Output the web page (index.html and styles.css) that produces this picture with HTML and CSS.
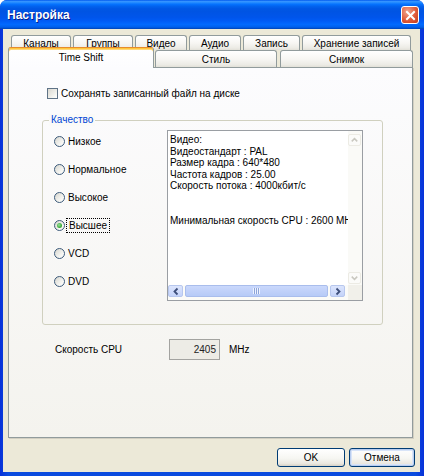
FILE: index.html
```html
<!DOCTYPE html>
<html>
<head>
<meta charset="utf-8">
<title>Настройка</title>
<link rel="stylesheet" href="styles.css">
</head>
<body>
<div class="window">
  <div class="titlebar">
    <span class="title">Настройка</span>
    <span class="close">
      <svg width="15" height="15" viewBox="0 0 15 15"><path d="M4 4 L11 11 M11 4 L4 11" stroke="#fff" stroke-width="2" stroke-linecap="square"/></svg>
    </span>
  </div>
  <div class="client">
    <div class="tabstrip">
      <div class="tabrow back">
        <div class="tab w-kan">Каналы</div>
        <div class="tab w-grp">Группы</div>
        <div class="tab w-vid">Видео</div>
        <div class="tab w-aud">Аудио</div>
        <div class="tab w-rec">Запись</div>
        <div class="tab w-sto">Хранение записей</div>
      </div>
      <div class="tabrow front">
        <div class="tab sel w-ts">Time Shift</div>
        <div class="tab w-sty">Стиль</div>
        <div class="tab w-snp">Снимок</div>
      </div>
    </div>
    <div class="panel">
      <div class="check"><span class="cbox"></span><span>Сохранять записанный файл на диске</span></div>
      <div class="group">
        <span class="legend">Качество</span>
        <div class="group-body">
          <div class="radios">
            <div class="radio"><span class="rbtn"></span><span>Низкое</span></div>
            <div class="radio"><span class="rbtn"></span><span>Нормальное</span></div>
            <div class="radio"><span class="rbtn"></span><span>Высокое</span></div>
            <div class="radio"><span class="rbtn on"></span><span class="focus">Высшее</span></div>
            <div class="radio"><span class="rbtn"></span><span>VCD</span></div>
            <div class="radio"><span class="rbtn"></span><span>DVD</span></div>
          </div>
          <div class="info">
            <div class="info-text">
              <div>Видео:</div>
              <div>Видеостандарт : PAL</div>
              <div>Размер кадра : 640*480</div>
              <div>Частота кадров : 25.00</div>
              <div>Скорость потока : 4000кбит/с</div>
              <div>&nbsp;</div>
              <div>&nbsp;</div>
              <div>Минимальная скорость CPU : 2600 MHz</div>
            </div>
            <div class="vscroll">
              <span class="vbtn"><svg width="12" height="12" viewBox="0 0 12 12"><path d="M3 7.5 L6 4.5 L9 7.5" fill="none" stroke="#C9C8C0" stroke-width="1.6"/></svg></span>
              <span class="vbtn"><svg width="12" height="12" viewBox="0 0 12 12"><path d="M3 4.5 L6 7.5 L9 4.5" fill="none" stroke="#C9C8C0" stroke-width="1.6"/></svg></span>
            </div>
            <div class="hscroll">
              <span class="hbtn"><svg width="12" height="11" viewBox="0 0 12 11"><path d="M7.5 2.5 L4.5 5.5 L7.5 8.5" fill="none" stroke="#3D4E7A" stroke-width="1.8"/></svg></span>
              <span class="thumb"><span class="grip"></span></span>
              <span class="hbtn"><svg width="12" height="11" viewBox="0 0 12 11"><path d="M4.5 2.5 L7.5 5.5 L4.5 8.5" fill="none" stroke="#3D4E7A" stroke-width="1.8"/></svg></span>
            </div>
            <div class="corner"></div>
          </div>
        </div>
      </div>
      <div class="cpu">
        <span class="cpu-label">Скорость CPU</span>
        <span class="cpu-input">2405</span>
        <span class="cpu-unit">MHz</span>
      </div>
    </div>
    <div class="buttons">
      <div class="btn w-ok">OK</div>
      <div class="btn def w-cancel">Отмена</div>
    </div>
  </div>
</div>
</body>
</html>
```

FILE: styles.css
```css
* { box-sizing: border-box; }
html, body { margin: 0; padding: 0; background: #ffffff; }
body {
  font-family: "Liberation Sans", Arial, sans-serif;
  font-size: 10px;
  color: #000;
}
.window {
  width: 424px;
  height: 476px;
  display: flex;
  flex-direction: column;
  background: linear-gradient(90deg, #0831D9, #0A4BDF 2%, #0A4BDF 98%, #0831D9);
  border-radius: 7px 7px 0 0;
  overflow: hidden;
}
.titlebar {
  height: 29px;
  flex: none;
  display: flex;
  align-items: center;
  justify-content: space-between;
  padding: 1px 5px 0 7px;
  background: linear-gradient(#0058EE 0%, #3593FF 5%, #288EFF 8%, #127DFF 12%, #036FFC 16%, #0262EE 22%, #0057E5 30%, #0054E3 40%, #0055EB 60%, #005BF5 72%, #026AFE 84%, #0062EF 92%, #0052D6 97%, #0040AB 100%);
}
.title {
  color: #fff;
  font-weight: bold;
  font-size: 12px;
  text-shadow: 1px 1px 0 #0A1E8C;
}
.close {
  width: 18px;
  height: 18px;
  border: 1px solid #fff;
  border-radius: 3px;
  background: radial-gradient(circle at 35% 30%, #F0A58E, #E05B3A 55%, #C0391B);
  display: flex;
  align-items: center;
  justify-content: center;
}
.client {
  flex: 1;
  margin: 0 4px 4px 3px;
  background: #ECE9D8;
  padding: 6px 7px 0 5px;
  display: flex;
  flex-direction: column;
}
/* tabs */
.tabstrip {
  height: 32px;
  flex: none;
  display: flex;
  flex-direction: column;
}
.tabrow { display: flex; flex: none; }
.tabrow.back { height: 15px; padding-left: 3px; gap: 2px; }
.tabrow.front { height: 17px; align-items: flex-end; }
.tab {
  height: 100%;
  border: 1px solid #919B9C;
  border-bottom: none;
  border-radius: 3px 3px 0 0;
  background: linear-gradient(#FFFFFF, #F7F6F3 50%, #ECEBE5 85%, #E2E0D8);
  display: flex;
  align-items: center;
  justify-content: center;
  white-space: nowrap;
  padding-top: 1px;
}
.tab.sel {
  height: 21px;
  margin-bottom: -1px;
  position: relative;
  z-index: 2;
  background: linear-gradient(#FFFFFF, #FCFCFE);
  border-top: 1px solid #E68B2C;
  box-shadow: inset 0 1px 0 #FFC73C, inset 0 2px 0 #FFD77A;
  padding-top: 0;
  padding-bottom: 1px;
}
.w-kan { width: 60px; }
.w-grp { width: 60px; }
.w-vid { width: 52px; }
.w-aud { width: 52px; }
.w-rec { width: 57px; }
.w-sto { width: 109px; }
.w-ts { width: 146px; }
.w-sty { width: 122px; margin-left: 1px; }
.w-snp { width: 133px; margin-left: 3px; }
/* panel */
.panel {
  height: 371px;
  flex: none;
  border: 1px solid #919B9C;
  background: linear-gradient(#FCFCFE, #F4F3EE);
  box-shadow: 1px 1px 0 #D2CFC2;
  display: flex;
  flex-direction: column;
  align-items: flex-start;
}
.check {
  margin: 19px 0 0 38px;
  height: 13px;
  display: flex;
  align-items: center;
  gap: 3px;
}
.cbox {
  width: 11px;
  height: 11px;
  border: 1px solid #5F7387;
  background: linear-gradient(135deg, #D9D8D1, #F4F4F0 70%, #FFFFFF);
}
.group {
  margin: 20px 0 0 33px;
  width: 341px;
  height: 205px;
  border: 1px solid #D0D0BF;
  border-radius: 3px;
  display: flex;
  flex-direction: column;
}
.legend {
  align-self: flex-start;
  margin: -7px 0 0 6px;
  padding: 0 2px;
  height: 12px;
  line-height: 12px;
  color: #0046D5;
  background: #FAFAF8;
}
.group-body {
  display: flex;
  align-items: flex-start;
  padding-left: 11px;
}
.radios {
  width: 113px;
  padding-top: 1px;
  display: flex;
  flex-direction: column;
}
.radio {
  height: 28px;
  display: flex;
  align-items: center;
  gap: 3px;
}
.rbtn {
  width: 11px;
  height: 11px;
  border: 1px solid #3C5A7A;
  border-radius: 50%;
  background: linear-gradient(135deg, #D6D5CE, #F3F3EF 60%, #FFFFFF);
  display: flex;
  align-items: center;
  justify-content: center;
}
.rbtn.on::after {
  content: "";
  width: 5px;
  height: 5px;
  border-radius: 50%;
  background: radial-gradient(circle at 40% 40%, #9BE09B, #3DAE3D 60%, #218A21);
}
.focus {
  outline: 1px dotted #000;
  outline-offset: 1px;
  padding: 0 1px;
}
.info {
  margin-top: 4px;
  width: 196px;
  height: 171px;
  border: 1px solid #9A9EA3;
  background: #fff;
  display: grid;
  grid-template-columns: 1fr 14px;
  grid-template-rows: 1fr 15px;
}
.info-text {
  padding: 3px 0 0 2px;
  line-height: 11.6px;
  white-space: nowrap;
  overflow: hidden;
}
.vscroll {
  background: #FAFAF7;
  display: flex;
  flex-direction: column;
  justify-content: space-between;
  padding: 3px 0 1px;
}
.vbtn {
  width: 13px;
  height: 12px;
  border: 1px solid #ECEBE4;
  border-radius: 2px;
  background: #FBFBF9;
  display: flex;
  align-items: center;
  justify-content: center;
}
.hscroll {
  display: flex;
  align-items: flex-start;
  gap: 2px;
  padding-right: 3px;
  background: #FBFBF8;
}
.hbtn {
  width: 15px;
  height: 12px;
  border: 1px solid #B7C7EE;
  border-radius: 2px;
  background: linear-gradient(#DCE5FD, #C4D3F9);
  display: flex;
  align-items: center;
  justify-content: center;
}
.thumb {
  flex: 1;
  height: 12px;
  border: 1px solid #A9BDEC;
  border-radius: 2px;
  background: linear-gradient(#CAD8FC, #B6CAF7);
  display: flex;
  align-items: center;
  justify-content: center;
}
.grip {
  width: 7px;
  height: 6px;
  background: repeating-linear-gradient(90deg, #EEF3FF 0 1px, #8DA4D8 1px 2px);
}
.corner { background: #F1F0EA; }
.cpu {
  margin: 14px 0 0 46px;
  height: 21px;
  display: flex;
  align-items: center;
}
.cpu-label { width: 114px; }
.cpu-input {
  width: 51px;
  height: 21px;
  border: 1px solid #A3A3A0;
  background: #EDECE6;
  display: flex;
  align-items: center;
  justify-content: flex-end;
  padding-right: 3px;
  color: #222;
}
.cpu-unit { margin-left: 9px; }
/* buttons */
.buttons {
  margin: 10px -2px 0 0;
  display: flex;
  justify-content: flex-end;
  gap: 4px;
}
.btn {
  height: 19px;
  border: 1px solid #003C74;
  border-radius: 3px;
  background: linear-gradient(#FFFFFF, #F6F6F2 55%, #EAE8E0 85%, #D6D0C5);
  display: flex;
  align-items: center;
  justify-content: center;
}
.btn.def {
  box-shadow: inset 0 0 0 1px #B9CDEF, inset 0 0 0 2px #D8E4F8;
}
.w-ok { width: 68px; }
.w-cancel { width: 66px; }
```
